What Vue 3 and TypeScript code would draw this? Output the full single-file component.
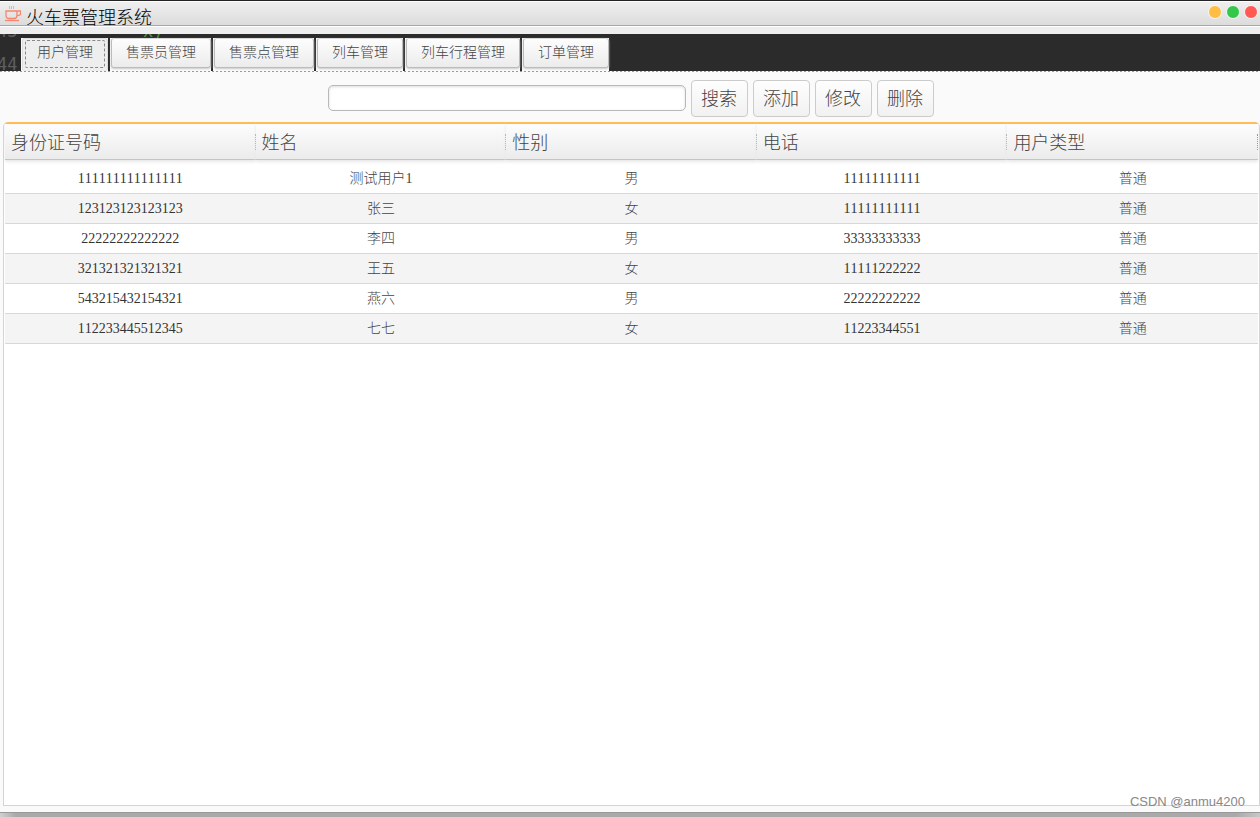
<script setup lang="ts">
import { ref } from 'vue'

interface User {
  id: string
  name: string
  gender: string
  phone: string
  type: string
}

const tabs: string[] = ['用户管理', '售票员管理', '售票点管理', '列车管理', '列车行程管理', '订单管理']
const active = ref(0)
const keyword = ref('')
const actions: string[] = ['搜索', '添加', '修改', '删除']
const columns: string[] = ['身份证号码', '姓名', '性别', '电话', '用户类型']
const users: User[] = [
  { id: '111111111111111', name: '测试用户1', gender: '男', phone: '11111111111', type: '普通' },
  { id: '123123123123123', name: '张三', gender: '女', phone: '11111111111', type: '普通' },
  { id: '22222222222222', name: '李四', gender: '男', phone: '33333333333', type: '普通' },
  { id: '321321321321321', name: '王五', gender: '女', phone: '11111222222', type: '普通' },
  { id: '543215432154321', name: '燕六', gender: '男', phone: '22222222222', type: '普通' },
  { id: '112233445512345', name: '七七', gender: '女', phone: '11223344551', type: '普通' },
]
</script>

<template>
  <div class="window">
    <header class="titlebar">
      <svg class="logo" viewBox="0 0 16 16" width="16" height="16" fill="none" stroke="#f8856c" aria-hidden="true">
        <path d="M4.500 0v3M6.500 0v3M8.500 0v3" stroke-opacity=".6" />
        <path d="M1 5h11v4.500q0 3-3 3h-5q-3 0-3-3zM12 5h3.500v3q0 1.500-3.500 1.500" stroke-width="1.300" />
        <path d="M0 14.500h14" stroke-width="1.300" />
      </svg>
      <h1 class="title">火车票管理系统</h1>
      <div class="controls">
        <button class="dot amber" type="button" aria-label="最小化"></button>
        <button class="dot green" type="button" aria-label="最大化"></button>
        <button class="dot red" type="button" aria-label="关闭"></button>
      </div>
    </header>
    <div class="frame"></div>

    <nav class="tabs">
      <span class="code line-a">43</span>
      <span class="code line-b">44</span>
      <span class="code snippet">x)</span>
      <div v-for="(tab, i) in tabs" :key="tab" class="slot">
        <button type="button" class="tab" :class="{ active: active === i }" @click="active = i">
          <span class="tab-label">{{ tab }}</span>
        </button>
      </div>
    </nav>

    <main class="content">
      <form class="toolbar" @submit.prevent>
        <input v-model="keyword" class="search" type="text" aria-label="搜索" />
        <button v-for="action in actions" :key="action" type="button" class="action">{{ action }}</button>
      </form>
      <section class="panel">
        <table class="grid">
          <thead>
            <tr>
              <th v-for="column in columns" :key="column" scope="col"><span class="head">{{ column }}</span></th>
            </tr>
          </thead>
          <tbody>
            <tr v-for="user in users" :key="user.id">
              <td class="num">{{ user.id }}</td>
              <td>{{ user.name }}</td>
              <td>{{ user.gender }}</td>
              <td class="num">{{ user.phone }}</td>
              <td>{{ user.type }}</td>
            </tr>
          </tbody>
        </table>
      </section>
    </main>
    <footer class="shadow"></footer>
    <span class="watermark">CSDN @anmu4200</span>
  </div>
</template>

<style>
body {
  margin: 0;
}
</style>

<style scoped>
.window {
  position: relative;
  display: flex;
  flex-direction: column;
  min-height: 100vh;
  box-sizing: border-box;
  border-top: 1px solid #232323;
  background: #fafafa;
  font-family: "Liberation Serif", "Noto Sans CJK SC", serif;
  font-weight: 300;
  font-kerning: none;
  color: #444;
}
.window * {
  box-sizing: border-box;
}
button,
input {
  margin: 0;
  font: inherit;
  font-kerning: none;
  color: inherit;
}
.titlebar {
  display: flex;
  align-items: center;
  height: 25px;
  padding: 0 2px 0 5px;
  border-top: 1px solid #fff;
  border-bottom: 1px solid #a8a8a8;
  background: linear-gradient(#f0eff0, #dcdcdc);
}
.logo {
  flex: none;
}
.title {
  flex: 1;
  margin: 0;
  padding: 8px 0 0 5px;
  font-size: 18px;
  font-weight: 300;
  line-height: 24px;
  color: #000;
}
.controls {
  display: flex;
  gap: 4px;
  padding-bottom: 4px;
}
.dot {
  width: 14px;
  height: 14px;
  padding: 0;
  border: 1px solid #f8f8f8;
  border-radius: 50%;
}
.amber {
  background: #ffbd44;
}
.green {
  background: #34c84a;
}
.red {
  background: #ff5a54;
}
.frame {
  height: 8px;
  border-top: 1px solid #fff;
  background: #edeeed;
}
.tabs {
  position: relative;
  display: flex;
  gap: 2px;
  height: 37px;
  padding: 4px 0 0 21px;
  overflow: hidden;
  background: #2b2b2b;
}
.code {
  position: absolute;
  font-family: "DejaVu Sans Mono", monospace;
  font-size: 17px;
  line-height: 20px;
  color: #5c5f62;
}
.line-a {
  left: -3px;
  top: -13px;
}
.line-b {
  left: -3px;
  top: 20px;
}
.snippet {
  left: 143px;
  top: -13px;
  color: #568a48;
}
.slot {
  position: relative;
  padding-left: 1px;
  background: #fafafa;
}
.tab {
  display: block;
  height: 30px;
  padding: 0 14px;
  border: 1px solid #bbb;
  border-top-color: #d8d8d8;
  border-radius: 3px;
  background: linear-gradient(#fdfdfd, #ececec);
  box-shadow: 0 1px 2px #ccc;
  font-size: 14px;
  line-height: 26px;
  white-space: nowrap;
}
.tab.active {
  height: 33px;
  padding: 2px;
  border-color: #ddd;
  border-bottom: 0;
  background: #eee;
  box-shadow: none;
}
.tab.active .tab-label {
  display: block;
  height: 28px;
  margin-top: -2px;
  padding: 0 11px;
  border: 1px dashed #888;
  border-radius: 2px;
  line-height: 24px;
}
.content {
  display: flex;
  flex: 1;
  flex-direction: column;
  padding: 0 0 6px 3px;
  border-bottom: 1px solid #999;
  position: relative;
}
.content::before {
  content: "";
  position: absolute;
  inset: 0 0 auto;
  height: 1px;
  background: repeating-linear-gradient(90deg, #999 0 2px, #fafafa 2px 4px);
}
.toolbar {
  display: flex;
  align-items: flex-start;
  justify-content: center;
  gap: 5px;
  height: 51px;
  padding: 9px 2px 0 0;
}
.search {
  width: 358px;
  height: 26px;
  margin-top: 5px;
  padding: 0 6px;
  border: 1px solid #b8b8b8;
  border-radius: 5px;
  outline: none;
  background: #fff;
  box-shadow: inset 0 1px 3px #ddd;
  font-size: 14px;
}
.action {
  width: 57px;
  height: 37px;
  padding: 0;
  border: 1px solid #ccc;
  border-radius: 4px;
  background: linear-gradient(#fefefe, #f1f1f1);
  font-size: 18px;
  line-height: 34px;
}
.panel {
  flex: 1;
  padding: 0 1px;
  border: 1px solid #d4d4d4;
  border-top: 0;
  border-radius: 5px 5px 0 0;
  overflow: hidden;
  background: #fff;
}
.grid {
  width: 100%;
  border-collapse: separate;
  border-spacing: 0;
  table-layout: fixed;
}
th {
  height: 38px;
  padding: 0;
  border-top: 2px solid #ffbc55;
  border-bottom: 1px solid #c4c4c4;
  background: linear-gradient(#fdfdfd, #ebebeb);
  box-shadow: 0 2px 3px #e8e8e8;
  font-size: 18px;
  font-weight: 300;
  text-align: left;
}
.head {
  display: block;
  height: 16px;
  padding-left: 6px;
  border-right: 1px dotted #999;
  line-height: 18px;
}
tbody::before {
  content: "";
  display: table-row;
  height: 4px;
}
td {
  height: 30px;
  padding: 0;
  border-bottom: 1px solid #d8d8d8;
  font-size: 14px;
  line-height: 20px;
  text-align: center;
}
.num {
  color: #333;
}
tbody tr:nth-child(even) {
  background: #f4f4f4;
}
.shadow {
  height: 4px;
  background: linear-gradient(90deg, #d0d0d0, #a9a9a9 16px, #a9a9a9 calc(100% - 24px), #c8c8c8);
}
.watermark {
  position: absolute;
  right: 15px;
  bottom: 6px;
  font-family: "Liberation Sans", Arial, sans-serif;
  font-size: 13px;
  font-weight: 400;
  line-height: 18px;
  color: #888;
}
</style>
